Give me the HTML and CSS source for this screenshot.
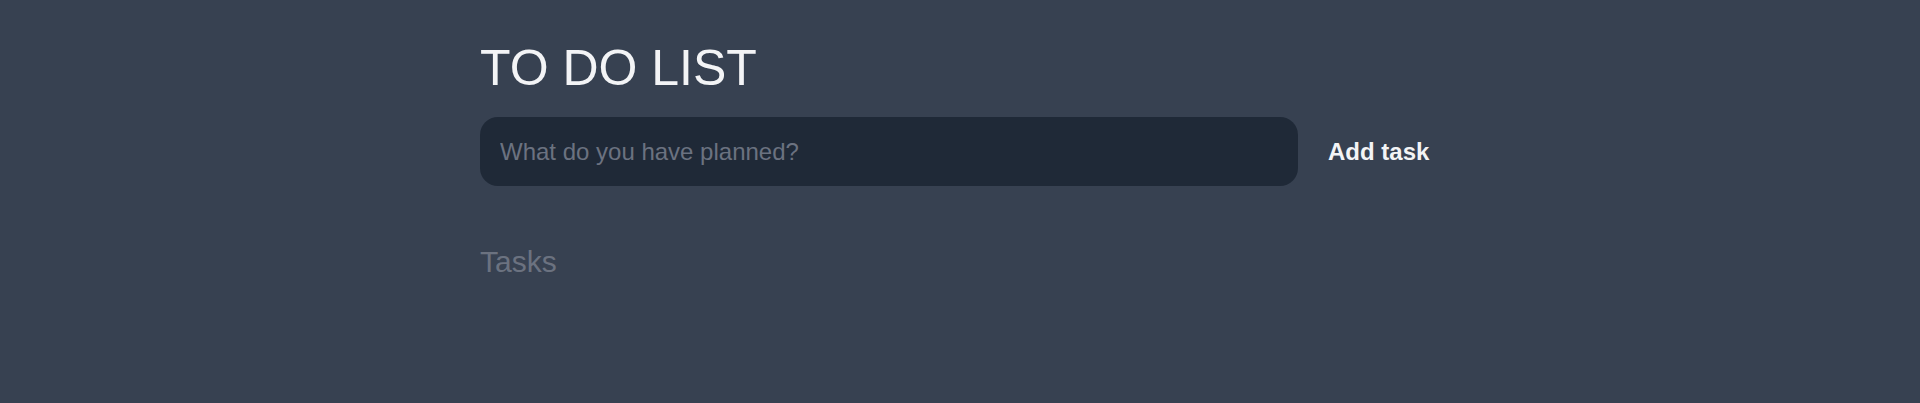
FILE: index.html
```html
<!DOCTYPE html>
<html lang="en">
<head>
<meta charset="utf-8">
<title>To Do List</title>
<link rel="stylesheet" href="styles.css">
</head>
<body>
<main class="app">
  <h1 class="title">TO DO LIST</h1>
  <form class="new-task">
    <input class="task-input" type="text" placeholder="What do you have planned?">
    <button class="add-btn" type="button">Add task</button>
  </form>
  <h2 class="tasks-heading">Tasks</h2>
</main>
</body>
</html>
```
FILE: styles.css
```css
* { box-sizing: border-box; }
html, body {
  margin: 0;
  height: 100%;
}
body {
  background: #374151;
  font-family: "Liberation Sans", Arial, sans-serif;
  color: #f3f4f6;
}
.app {
  width: 960px;
  margin: 0 auto;
  padding-top: 43px;
}
.title {
  margin: 0;
  font-size: 50px;
  line-height: 50px;
  font-weight: 400;
  color: #f3f4f6;
}
.new-task {
  margin-top: 24px;
  display: flex;
  align-items: center;
  gap: 30px;
}
.task-input {
  width: 818px;
  height: 69px;
  padding: 0 20px;
  border: none;
  border-radius: 18px;
  background: #1f2937;
  color: #f3f4f6;
  font-family: inherit;
  font-size: 24px;
  outline: none;
}
.task-input::placeholder {
  color: #6b7280;
}
.add-btn {
  padding: 0;
  border: none;
  background: transparent;
  color: #f3f4f6;
  font-family: inherit;
  font-size: 24px;
  font-weight: 700;
  cursor: pointer;
}
.tasks-heading {
  margin: 61px 0 0;
  font-size: 30px;
  line-height: 30px;
  font-weight: 400;
  color: #6b7280;
}
```
